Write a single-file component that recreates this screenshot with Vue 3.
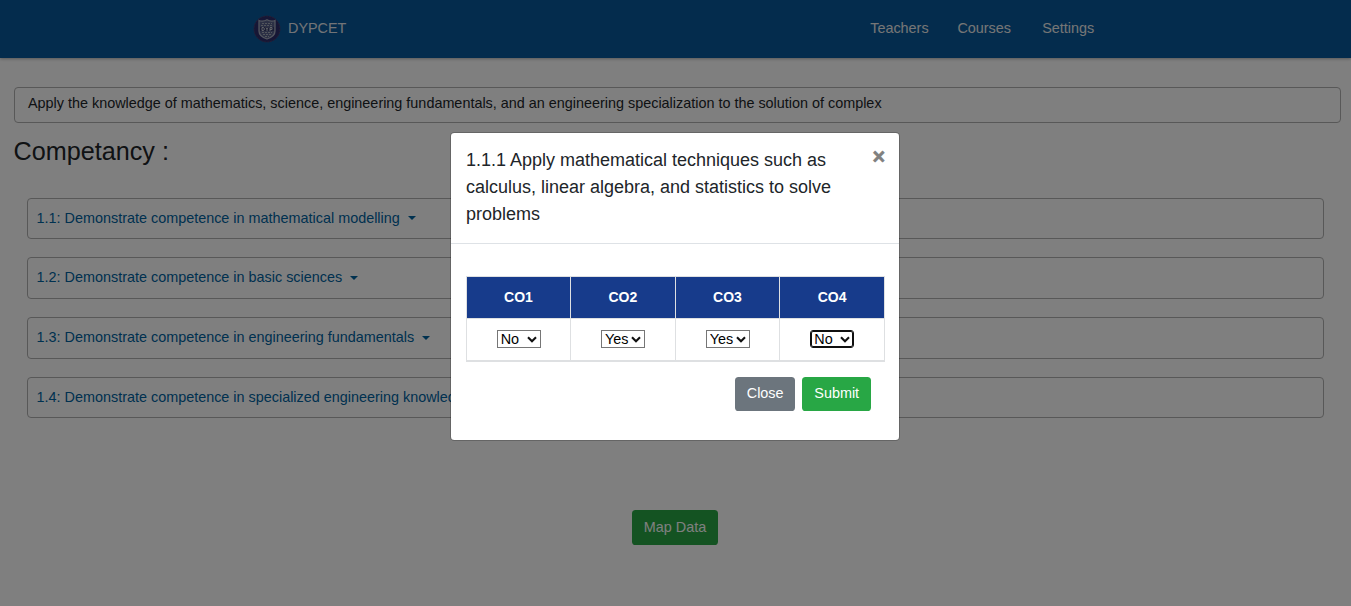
<script setup>
import { ref } from 'vue'

const links = ['Teachers', 'Courses', 'Settings']
const competencies = [
  '1.1: Demonstrate competence in mathematical modelling',
  '1.2: Demonstrate competence in basic sciences',
  '1.3: Demonstrate competence in engineering fundamentals',
  '1.4: Demonstrate competence in specialized engineering knowledge'
]
const outcomes = ref([
  { name: 'CO1', value: 'No' },
  { name: 'CO2', value: 'Yes' },
  { name: 'CO3', value: 'Yes' },
  { name: 'CO4', value: 'No', active: true }
])
</script>

<template>
  <div class="page">
    <header class="navbar">
      <div class="brand">
        <svg class="logo" viewBox="0 0 28 28" width="28" height="28">
          <circle cx="14" cy="14" r="13" fill="#2c2c6a" stroke="#503a68" stroke-width="1" stroke-dasharray="2 1" />
          <path d="M6 5.500 Q10 7 14 4.800 Q18 7 22 5.500 V16 Q22 21.500 14 24 Q6 21.500 6 16 Z" fill="#59618a" stroke="#a4abbd" stroke-width="1.300" />
          <path d="M9 8.500h10M8 10.500h12M9 17.500h10M10 19.500h8M12 21.500h4" stroke="#a5abb9" stroke-width="1" stroke-dasharray="2 1" />
          <path d="M7 12h14v4H7z" fill="#343a69" />
          <path d="M9 12.500v3h1.500l1-1.500-1-1.500zM13 12.500l1 1.500 1-1.500M14 14v2M17 16v-3.500h2v2h-2" fill="none" stroke="#d5d8df" stroke-width=".9" />
        </svg>
        <span>DYPCET</span>
      </div>
      <nav class="links">
        <a v-for="l in links" :key="l">{{ l }}</a>
      </nav>
    </header>
    <main class="content">
      <div class="outcome">Apply the knowledge of mathematics, science, engineering fundamentals, and an engineering specialization to the solution of complex</div>
      <h3>Competancy :</h3>
      <ul class="list">
        <li v-for="c in competencies" :key="c"><a>{{ c }}<i class="caret"></i></a></li>
      </ul>
      <div class="actions"><button class="btn green">Map Data</button></div>
    </main>

    <div class="backdrop">
      <section class="modal" role="dialog">
        <div class="modal-head">
          <h5>1.1.1 Apply mathematical techniques such as calculus, linear algebra, and statistics to solve problems</h5>
          <button class="close" aria-label="Close">×</button>
        </div>
        <div class="modal-body">
          <table>
            <thead>
              <tr><th v-for="o in outcomes" :key="o.name">{{ o.name }}</th></tr>
            </thead>
            <tbody>
              <tr>
                <td v-for="o in outcomes" :key="o.name">
                  <span class="select">
                    <select v-model="o.value" :class="{ active: o.active }">
                      <option>Yes</option>
                      <option>No</option>
                    </select>
                    <svg class="arrow" viewBox="0 0 10 7" width="10" height="7">
                      <path d="M1 1.200 5 5.200 9 1.200" fill="none" stroke="#101010" stroke-width="2.100" />
                    </svg>
                  </span>
                </td>
              </tr>
            </tbody>
          </table>
          <div class="buttons">
            <button class="btn gray">Close</button>
            <button class="btn green">Submit</button>
          </div>
        </div>
      </section>
    </div>
  </div>
</template>

<style>
body { margin: 0; overflow: hidden; background: #fff; }
</style>

<style scoped>
* { box-sizing: border-box; }
.page {
  position: relative;
  height: 606px;
  overflow: hidden;
  font: 14.4px/1.5 "Liberation Sans", Arial, sans-serif;
  color: #212529;
}
.navbar {
  height: 57.500px;
  padding: 0 256.800px 0 253px;
  display: flex;
  align-items: center;
  justify-content: space-between;
  background: #08589a;
  color: #fff;
  box-shadow: 0 1px 3px rgba(0, 0, 0, .3);
}
.brand { display: flex; align-items: center; gap: 7px; height: 56px; color: #e4e8ee; }
.logo { display: block; }
.links { display: flex; gap: 28.800px; color: #ececec; }
.links a:last-child { margin-left: 2.400px; }
.content { padding: 29.500px 10px 0 14px; }
.outcome {
  height: 36px;
  padding: 5px 13px;
  border: 1px solid #b0b0b0;
  border-radius: 4px;
}
h3 { margin: 12.600px 0 0 -0.500px; font-size: 25.200px; line-height: 30px; font-weight: 400; }
.list { list-style: none; margin: 32px 17px 0 13px; padding: 0; }
.list li {
  height: 41.400px;
  margin-bottom: 18.400px;
  padding: 9px 8.600px;
  border: 1px solid #b0b0b0;
  border-radius: 4px;
}
.list a { color: #0062a0; }
.caret {
  display: inline-block;
  margin-left: 7.800px;
  vertical-align: 2.600px;
  border: 4.300px solid transparent;
  border-top-color: #0062a0;
  border-bottom: 0;
}
.actions { margin-top: 92px; padding-right: 5px; text-align: center; }
.btn {
  height: 34px;
  padding: 0 11.500px;
  border: 0;
  border-radius: 3.600px;
  font: inherit;
  line-height: 33px;
  color: #fff;
}
.actions .btn { height: 35px; }
.green { background: #28a745; }
.gray { background: #6c757d; }
.backdrop {
  position: absolute;
  inset: 0;
  display: flex;
  justify-content: center;
  align-items: flex-start;
  padding: 132px 1px 0 0;
  background: rgba(0, 0, 0, .5);
}
.modal {
  width: 450px;
  height: 309px;
  background: #fff;
  background-clip: padding-box;
  border: 1px solid rgba(0, 0, 0, .2);
  border-radius: 4.300px;
}
.modal-head {
  display: flex;
  justify-content: space-between;
  height: 111px;
  padding: 14px 14px 14px 14.900px;
  border-bottom: 1px solid #dee2e6;
}
h5 { width: 385px; margin: 0; font-size: 18px; line-height: 27px; font-weight: 400; }
.close {
  align-self: flex-start;
  margin-top: -1px;
  padding: 0;
  border: 0;
  background: none;
  font: bold 21.600px/22px "Liberation Sans", Arial, sans-serif;
  color: #808080;
  -webkit-text-stroke: .6px #808080;
}
.modal-body { padding: 32px 14px 0 15px; }
table { width: 419px; table-layout: fixed; border-collapse: collapse; border-bottom: 2px solid #dee0e2; }
th, td { padding: 0; border: 1px solid #dee0e2; text-align: center; vertical-align: middle; }
th:first-child { width: 104px; }
th { height: 42px; background: #173b8b; color: #fff; font-size: 14px; }
td { height: 42px; padding: 0 0 2px .4px; line-height: 19px; }
.select { position: relative; display: inline-block; width: 44px; height: 18px; vertical-align: middle; }
select {
  display: block;
  appearance: none;
  width: 44px;
  height: 18px;
  margin: 0;
  padding: 0 0 0 3px;
  border: 1px solid #767676;
  border-radius: 0;
  background-color: #fff;
  font: 14.400px/16px "Liberation Sans", Arial, sans-serif;
  color: #000;
}
select.active { border-color: #101010; border-radius: 3px; outline: 1px solid #101010; outline-offset: -2px; }
.arrow { position: absolute; right: 4px; top: 6px; pointer-events: none; }
.buttons { display: flex; justify-content: flex-end; gap: 7px; margin-top: 15px; padding-right: 14px; }
.buttons .btn { padding: 0 11.900px; }
</style>
